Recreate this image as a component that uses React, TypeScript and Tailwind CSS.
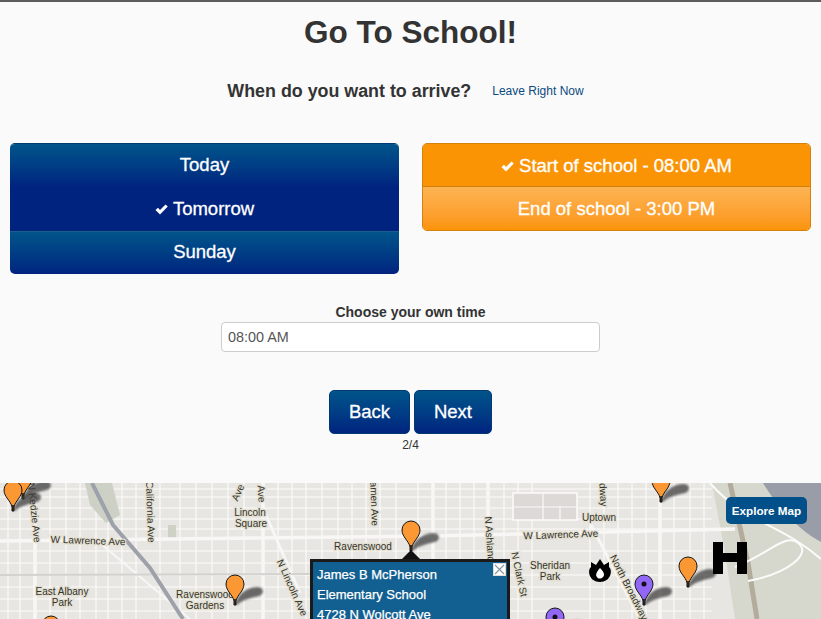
const verticals = [8, 20, 50, 66, 80, 96, 108, 122, 136, 160, 180, 196, 212, 228, 244, 278, 292, 306, 322, 338, 352, 366, 380, 396, 418, 446, 460, 474, 504, 518, 532, 590, 604, 618, 632, 646, 674, 690, 704];
const horizontals = [6, 14, 25, 36, 46, 68, 80, 92, 104, 116, 128];
const mainVerticals = [35, 263, 433, 488, 660];

const Pin = ({ x, y, color, dot }: { x: number; y: number; color: string; dot?: boolean }) => (
  <g transform={`translate(${x} ${y})`}>
    <path
      d="M0 -1 C3 -11 12 -18 23 -18 C30 -17 29 -11 24 -9 C15 -7 7 -5 2 0 Z"
      fill="#3f3f3f"
      opacity="0.75"
      className="blur-[1px]"
    />
    <path
      d="M-1 0 L-1 -4 C-2 -10 -9 -14 -9 -21 A9 9 0 1 1 9 -21 C9 -14 2 -10 1 -4 L1 0 Z"
      fill={color}
      stroke="#151515"
      strokeWidth="1"
    />
    <path d="M0 0 L0 -6" stroke="#111" strokeWidth="1.5" />
    {dot && <circle cx="0" cy="-21" r="2.5" fill="#111" />}
  </g>
);

const Label = ({ x, y, r = 0, children }: { x: number; y: number; r?: number; children: string }) => (
  <text
    transform={`translate(${x} ${y}) rotate(${r})`}
    textAnchor="middle"
    fontSize="10"
    fill="#33322c"
    stroke="#e4e1d3"
    strokeWidth="2.5"
    paintOrder="stroke"
    fontFamily="Liberation Sans, sans-serif"
  >
    {children}
  </text>
);

const MapArt = () => (
  <svg className="block h-full w-full" viewBox="0 0 821 136">
    <rect width="821" height="136" fill="#e8e6e3" />
    {/* park and lake */}
    <path d="M712 0 L821 0 L821 136 L735 136 L725 70 Z" fill="#d6d8cd" />
    <path d="M763 0 L821 0 L821 59 C800 48 778 25 763 0 Z" fill="#999da8" />
    {/* side streets */}
    {verticals.map((x) => (
      <line key={x} x1={x} y1="0" x2={x} y2="136" stroke="#fbfbfa" strokeWidth="1.1" />
    ))}
    {horizontals.map((y) => (
      <line key={y} x1="0" y1={y} x2="712" y2={y} stroke="#fbfbfa" strokeWidth="1.1" />
    ))}
    <rect x="513" y="10" width="64" height="27" fill="#dcd9d7" stroke="#fbfbfa" strokeWidth="1.5" />
    <path d="M513 24 H577 M543 10 V37 M560 24 V37" stroke="#fbfbfa" strokeWidth="1.2" fill="none" />
    <rect x="168" y="42" width="8" height="14" fill="#ced2c6" />
    {/* main roads */}
    {mainVerticals.map((x) => (
      <line key={x} x1={x} y1="0" x2={x} y2="136" stroke="#f8f7f5" strokeWidth="3.5" />
    ))}
    <path d="M0 58 L430 53 L735 46" fill="none" stroke="#f8f7f5" strokeWidth="3.5" />
    <path d="M265 30 L300 110" fill="none" stroke="#f8f7f5" strokeWidth="3" />
    <path d="M590 40 L640 136" fill="none" stroke="#f8f7f5" strokeWidth="3" />
    <path d="M100 60 L190 136" fill="none" stroke="#f8f7f5" strokeWidth="2" />
    <path d="M0 92 L310 91" fill="none" stroke="#d3d2cf" strokeWidth="2" />
    {/* expressway */}
    <path d="M85 0 L112 0 L120 32 L106 40 L90 22 Z" fill="#cdd1c5" />
    <path d="M92 0 L113 42 L150 85 L183 136" fill="none" stroke="#9da1aa" strokeWidth="4" />
    {/* lake shore */}
    <path d="M730 0 L748 80 L757 136" fill="none" stroke="#b3ab9b" strokeWidth="5" />
    <path d="M710 0 C745 40 780 40 821 76" fill="none" stroke="#fbfbfa" strokeWidth="2" />
    <path d="M735 84 C770 70 785 50 798 60 C812 70 790 90 748 98" fill="none" stroke="#fbfbfa" strokeWidth="2" />
    <Label x={147} y={29} r={88}>California Ave</Label>
    <Label x={31} y={30} r={84}>N Kedzie Ave</Label>
    <Label x={88} y={61} r={2}>W Lawrence Ave</Label>
    <Label x={250} y={33}>Lincoln</Label>
    <Label x={251} y={44}>Square</Label>
    <Label x={241} y={11} r={-66}>Ave</Label>
    <Label x={258} y={11} r={86}>Ave</Label>
    <Label x={371} y={21} r={88}>amen Ave</Label>
    <Label x={363} y={67}>Ravenswood</Label>
    <Label x={62} y={112}>East Albany</Label>
    <Label x={62} y={123}>Park</Label>
    <Label x={205} y={115}>Ravenswood</Label>
    <Label x={205} y={126}>Gardens</Label>
    <Label x={289} y={106} r={66}>N Lincoln Ave</Label>
    <Label x={487} y={66} r={86}>N Ashland Ave</Label>
    <Label x={516} y={92} r={78}>N Clark St</Label>
    <Label x={599} y={38}>Uptown</Label>
    <Label x={561} y={55} r={-2}>W Lawrence Ave</Label>
    <Label x={550} y={86}>Sheridan</Label>
    <Label x={550} y={97}>Park</Label>
    <Label x={626} y={106} r={63}>North Broadway</Label>
    <Label x={600} y={12} r={86}>dway</Label>
    <Pin x={23} y={16} color="#fb9833" />
    <Pin x={13} y={28} color="#fb9833" />
    <Pin x={235} y={122} color="#fb9833" />
    <Pin x={411} y={68} color="#fb9833" />
    <Pin x={661} y={19} color="#fb9833" />
    <Pin x={688} y={104} color="#fb9833" />
    <Pin x={644} y={122} color="#9367f5" dot />
    <Pin x={555} y={155} color="#9367f5" dot />
    <Pin x={51} y={163} color="#fb9833" />
    <path d="M411 67 L421 77 L401 77 Z" fill="#111" />
    {/* fire station */}
    <path
      d="M600 76 L604 82 L609 79 L609 84 C613 87 611 99 600 99 C589 99 587 87 591 84 L591 79 L596 82 Z"
      fill="#000"
    />
    <path d="M600 85 C604 89 605 92 603 94 C601 96 598 96 597 94 C595 92 597 88 600 85 Z" fill="#fff" />
    {/* hospital */}
    <path d="M713 59 H723 V70 H737 V59 H747 V91 H737 V79 H723 V91 H713 Z" fill="#000" />
  </svg>
);

const Check = () => (
  <svg className="h-[11px] w-[13px]" viewBox="0 0 13 11">
    <path d="M0.5 6 L3 3.8 L5 6 L10.5 0.5 L12.8 2.6 L5 10.5 Z" fill="#fff" />
  </svg>
);

export default function App() {
  return (
    <div className="h-[619px] overflow-hidden border-t-2 border-[#5c5c5c] bg-[#fafafa] text-[#333] font-['Liberation_Sans',Arial,sans-serif]">
      <h1 className="pt-[11px] text-center text-[31.5px] leading-[38px] font-bold">Go To School!</h1>

      <div className="mt-[24px] flex h-[32px] items-center justify-center pr-[10px]">
        <h2 className="text-[17.85px] font-bold">When do you want to arrive?</h2>
        <a className="ml-[21px] text-[12px] text-[#0b4a80]">Leave Right Now</a>
      </div>

      <div className="mt-[36px] grid grid-cols-2 items-start gap-[23px] px-[10px]">
        <div className="overflow-hidden rounded-[5px] border-t border-[#013a70] text-[18.5px] text-white [-webkit-text-stroke:0.3px_white]">
          <div className="flex h-[43px] items-center justify-center bg-gradient-to-b from-[#02548a] to-[#00237f] pb-[2px]">
            Today
          </div>
          <div className="flex h-[44px] items-center justify-center gap-[5px] bg-[#00237f]">
            <Check /> Tomorrow
          </div>
          <div className="flex h-[43px] items-center justify-center border-t border-[#1a5f8c] bg-gradient-to-b from-[#02548a] to-[#00237f] pb-[2px]">
            Sunday
          </div>
        </div>
        <div className="overflow-hidden rounded-[5px] border border-[#d5820c] text-[18.5px] text-white [-webkit-text-stroke:0.3px_white]">
          <div className="flex h-[43px] items-center justify-center gap-[5px] border-b border-[#cf7f0c] bg-[#fb9405] pt-[2px]">
            <Check /> Start of school - 08:00 AM
          </div>
          <div className="flex h-[43px] items-center justify-center bg-gradient-to-b from-[#fdb452] to-[#fb9405]">
            End of school - 3:00 PM
          </div>
        </div>
      </div>

      <div className="mt-[29px] flex flex-col items-center">
        <label className="text-[14px] leading-[18px] font-bold">Choose your own time</label>
        <input
          readOnly
          value="08:00 AM"
          className="mt-[1px] h-[30px] w-[379px] rounded-[4px] border border-[#ccc] bg-white px-[6px] text-[14.4px] text-[#555]"
        />
      </div>

      <div className="mt-[38px] flex justify-center gap-[4px] text-[18.5px] text-white [-webkit-text-stroke:0.3px_white]">
        <button className="h-[44px] w-[81px] rounded-[5px] border border-[#013a70] bg-gradient-to-b from-[#02548a] to-[#00237f]">
          Back
        </button>
        <button className="h-[44px] w-[78px] rounded-[5px] border border-[#013a70] bg-gradient-to-b from-[#02548a] to-[#00237f]">
          Next
        </button>
      </div>
      <div className="mt-[3px] text-center text-[12px] leading-[16px]">2/4</div>

      <div className="relative mt-[30px] h-[136px] overflow-hidden">
        <MapArt />
        <a className="absolute top-[14px] left-[726px] flex h-[27px] w-[81px] items-center justify-center rounded-[5px] bg-[#02508a] text-[11.7px] font-bold text-white">
          Explore Map
        </a>
        <div className="absolute top-[76px] left-[310px] h-[70px] w-[200px] border-[3px] border-[#1a1a1a] bg-[#125f91] pt-[3px] pl-[4px] text-[13px] leading-[20px] text-white [-webkit-text-stroke:0.25px_white]">
          <div>James B McPherson</div>
          <div>Elementary School</div>
          <div>4728 N Wolcott Ave</div>
          <button className="absolute top-[1px] right-[1px] flex h-[13px] w-[13px] items-center justify-center border border-[#ddd] bg-white text-[#8a97a3]">
            <svg className="h-[11px] w-[11px]" viewBox="0 0 11 11">
              <path d="M1 1 L10 10 M10 1 L1 10" stroke="currentColor" strokeWidth="1.2" />
            </svg>
          </button>
        </div>
      </div>
    </div>
  );
}
